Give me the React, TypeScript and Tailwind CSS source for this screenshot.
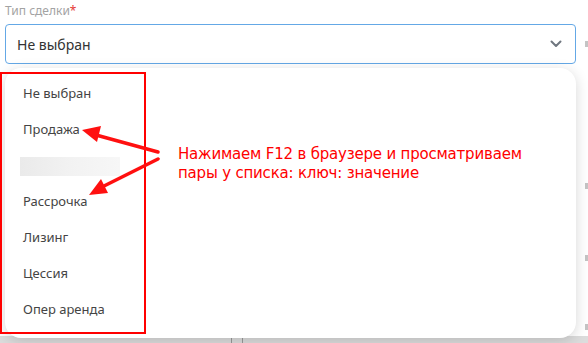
import React from 'react'

const options = ['Не выбран', 'Продажа', null, 'Рассрочка', 'Лизинг', 'Цессия', 'Опер аренда']

function Chevron() {
  return (
    <svg width="12" height="8" viewBox="0 0 12 8" fill="none">
      <path d="M1.5 1.5L6 6L10.5 1.5" stroke="#707780" strokeWidth="2" strokeLinecap="round" strokeLinejoin="round" />
    </svg>
  )
}

function Arrows() {
  return (
    <svg className="absolute left-0 top-0 z-30 pointer-events-none" width="588" height="343" viewBox="0 0 588 343">
      <g stroke="#ff1010" strokeWidth="3.5" strokeLinecap="round">
        <line x1="158" y1="152" x2="96" y2="135" />
        <line x1="158" y1="159" x2="102" y2="187" />
      </g>
      <polygon points="82,130 101,126 97,142" fill="#ff1010" />
      <polygon points="89,195 101,179 108,193" fill="#ff1010" />
    </svg>
  )
}

// clipped glyphs of the page underneath, at the right edge
function EdgeMark({ top }: { top: string }) {
  return <div className={`absolute right-0 h-[6px] w-[3px] bg-[#c4c4c4] ${top}`} />
}

export default function App() {
  return (
    <div className="relative w-[588px] h-[343px] overflow-hidden bg-white" style={{ fontFamily: '"Noto Sans", "Open Sans", sans-serif' }}>
      <div className="pl-[5px] pr-[12px] pt-[2px]">
        <div className="text-[12px] leading-[18px] text-[#a3a3a3]">
          Тип сделки<span className="text-[#e53935]">*</span>
        </div>
        <div className="mt-[4px] flex h-[40px] items-center justify-between rounded-[4px] border border-[#64a8e6] pl-[11px] pr-[13px]">
          <span className="text-[14px] text-[#333]">Не выбран</span>
          <Chevron />
        </div>
        <div className="relative z-10 mt-[4px] h-[270px] rounded-[16px] bg-white pt-[8px] shadow-[0_3px_14px_rgba(0,0,0,0.16)]">
          {options.map((o, i) =>
            o ? (
              <div key={i} className="flex h-[36px] items-center pl-[18px] text-[13px] text-[#444]">
                {o}
              </div>
            ) : (
              <div key={i} className="flex h-[36px] items-center pl-[15px]">
                <div className="h-[19px] w-[100px] bg-gradient-to-r from-[#eaeaea] via-[#f2f2f2] to-[#f7f7f7]" />
              </div>
            )
          )}
        </div>
      </div>
      <div className="absolute bottom-0 left-0 flex h-[7px] w-full bg-[#dcdcdc]">
        <div className="ml-[231px] w-px bg-[#9a9a9a]" />
        <div className="ml-[10px] w-px bg-[#9a9a9a]" />
      </div>
      <EdgeMark top="top-[41px]" />
      <EdgeMark top="top-[183px]" />
      <EdgeMark top="top-[255px]" />
      <EdgeMark top="top-[324px]" />
      <div className="absolute left-0 top-[72px] z-20 h-[262px] w-[146px] border-2 border-[#ff0000] pointer-events-none" />
      <div
        className="absolute left-[178px] top-[145px] z-20 text-[15px] leading-[19px] tracking-[-0.2px] text-[#ff0000]"
        style={{ fontFamily: '"DejaVu Sans", sans-serif' }}
      >
        <div>Нажимаем F12 в браузере и просматриваем</div>
        <div>пары у списка: ключ: значение</div>
      </div>
      <Arrows />
    </div>
  )
}
